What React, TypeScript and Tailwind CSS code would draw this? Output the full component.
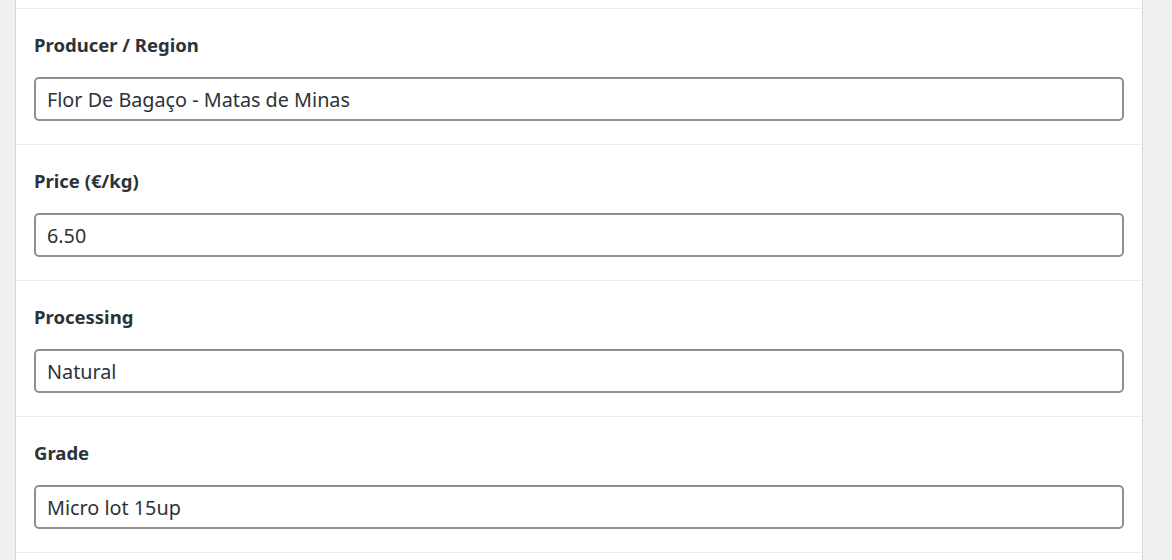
const fields = [
  { label: 'Producer / Region', value: 'Flor De Bagaço - Matas de Minas' },
  { label: 'Price (€/kg)', value: '6.50' },
  { label: 'Processing', value: 'Natural' },
  { label: 'Grade', value: 'Micro lot 15up' },
];

function Field({ label, value }: { label: string; value: string }) {
  return (
    <div className="border-t border-[#ececec] px-[18px] pt-[24px] pb-[23px]">
      <label className="block h-[24px] text-[18.5px] leading-[24px] font-bold text-[#2c3338]">{label}</label>
      <input
        type="text"
        defaultValue={value}
        className="mt-[20px] block w-full h-[44px] rounded-[5px] border-2 border-[#8c8f94] bg-white px-[11px] text-[19.8px] text-[#2c3338] outline-none"
      />
    </div>
  );
}

export default function App() {
  return (
    <div
      className="h-[560px] overflow-hidden bg-[#f0f0f1] pl-[15px] pr-[29px]"
      style={{ fontFamily: '"Noto Sans", "Open Sans", sans-serif' }}
    >
      <div className="h-full border-x border-[#d6d6d8] bg-white">
        <div className="h-[8px]" />
        {fields.map((f) => (
          <Field key={f.label} {...f} />
        ))}
        <div className="border-t border-[#ececec] h-[20px]" />
      </div>
    </div>
  );
}
